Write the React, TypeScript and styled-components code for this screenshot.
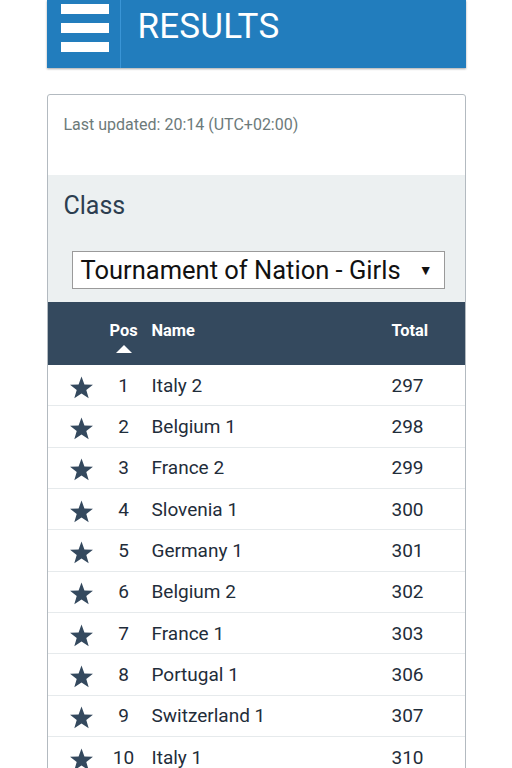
import styled, { createGlobalStyle } from "styled-components";

const Global = createGlobalStyle`
  body {
    margin: 0;
    background: #fff;
    font-family: Roboto, "Liberation Sans", sans-serif;
  }
`;

const Page = styled.div`
  width: 419px;
  margin: 0 auto;
  display: flex;
  flex-direction: column;
  gap: 26px;
`;

const TopBar = styled.header`
  height: 68px;
  background: #227dbd;
  display: flex;
  box-shadow: 0 1px 2px rgba(0, 0, 0, 0.35);
`;

const Burger = styled.div`
  width: 74px;
  border-right: 1px solid #3a95d6;
  display: flex;
  flex-direction: column;
  gap: 9px;
  padding: 4px 0 0 14px;
  box-sizing: border-box;
  span {
    display: block;
    width: 48px;
    height: 10px;
    background: #fff;
  }
`;

const Title = styled.h1`
  margin: 0;
  padding: 6px 0 0 17px;
  font-size: 35px;
  font-weight: 400;
  color: #fff;
  letter-spacing: 0.2px;
`;

const Card = styled.section`
  border: 1px solid #b3bac0;
  border-radius: 3px;
  overflow: hidden;
`;

const Updated = styled.div`
  height: 80px;
  padding: 20px 16px 0;
  box-sizing: border-box;
  font-size: 16px;
  color: #6c7a7a;
`;

const ClassBox = styled.div`
  background: #ecf0f1;
  padding: 16px 20px 13px 16px;
  display: flex;
  flex-direction: column;
`;

const ClassLabel = styled.div`
  font-size: 25px;
  color: #2c3e50;
  line-height: 30px;
`;

const Select = styled.div`
  margin: 30px 0 0 8px;
  height: 36px;
  border: 1px solid #9a9a9a;
  background: #fff;
  display: flex;
  align-items: center;
  justify-content: space-between;
  padding: 0 11px 0 8px;
  font-size: 25.5px;
  color: #111;
  span:last-child {
    font-size: 14px;
  }
`;

const Table = styled.div`
  display: flex;
  flex-direction: column;
`;

const Grid = styled.div`
  display: grid;
  grid-template-columns: 52px 46px 240px 1fr;
  align-items: center;
`;

const Head = styled(Grid)`
  height: 63px;
  background: #34495e;
  color: #fff;
  font-weight: 700;
  font-size: 16.4px;
  align-items: start;
  padding-top: 19px;
  box-sizing: border-box;
`;

const PosHead = styled.div`
  display: flex;
  flex-direction: column;
  align-items: center;
  padding-left: 2px;
  &::after {
    content: "";
    margin-top: 5px;
    border-left: 8px solid transparent;
    border-right: 8px solid transparent;
    border-bottom: 8px solid #fff;
  }
`;

const Row = styled(Grid)`
  height: 41.33px;
  box-sizing: border-box;
  border-bottom: 1px solid #e6eaec;
  font-size: 19px;
  color: #1f2d3a;
`;

const Pos = styled.div`
  text-align: center;
  padding-left: 2px;
`;

const Name = styled.div`
  padding-left: 6px;
`;

const Total = styled.div`
  padding-left: 6px;
`;

const StarCell = styled.div`
  display: flex;
  justify-content: flex-end;
  padding: 5px 6px 0 0;
`;

const Star = () => (
  <svg width="25" height="24" viewBox="0 0 24 23">
    <path
      d="M12 0.5l2.8 7.6 8.2 0.3-6.4 5 2.3 7.9L12 16.7l-6.9 4.6 2.3-7.9-6.4-5 8.2-0.3z"
      fill="#34495e"
    />
  </svg>
);

const rows: [number, string, number][] = [
  [1, "Italy 2", 297],
  [2, "Belgium 1", 298],
  [3, "France 2", 299],
  [4, "Slovenia 1", 300],
  [5, "Germany 1", 301],
  [6, "Belgium 2", 302],
  [7, "France 1", 303],
  [8, "Portugal 1", 306],
  [9, "Switzerland 1", 307],
  [10, "Italy 1", 310],
  [11, "Austria 1", 312],
];

export default function App() {
  return (
    <>
      <Global />
      <Page>
        <TopBar>
          <Burger>
            <span />
            <span />
            <span />
          </Burger>
          <Title>RESULTS</Title>
        </TopBar>
        <Card>
          <Updated>Last updated: 20:14 (UTC+02:00)</Updated>
          <ClassBox>
            <ClassLabel>Class</ClassLabel>
            <Select>
              <span>Tournament of Nation - Girls</span>
              <span>▼</span>
            </Select>
          </ClassBox>
          <Table>
            <Head>
              <div />
              <PosHead>Pos</PosHead>
              <Name>Name</Name>
              <Total>Total</Total>
            </Head>
            {rows.map(([p, n, t]) => (
              <Row key={p}>
                <StarCell>
                  <Star />
                </StarCell>
                <Pos>{p}</Pos>
                <Name>{n}</Name>
                <Total>{t}</Total>
              </Row>
            ))}
          </Table>
        </Card>
      </Page>
    </>
  );
}
